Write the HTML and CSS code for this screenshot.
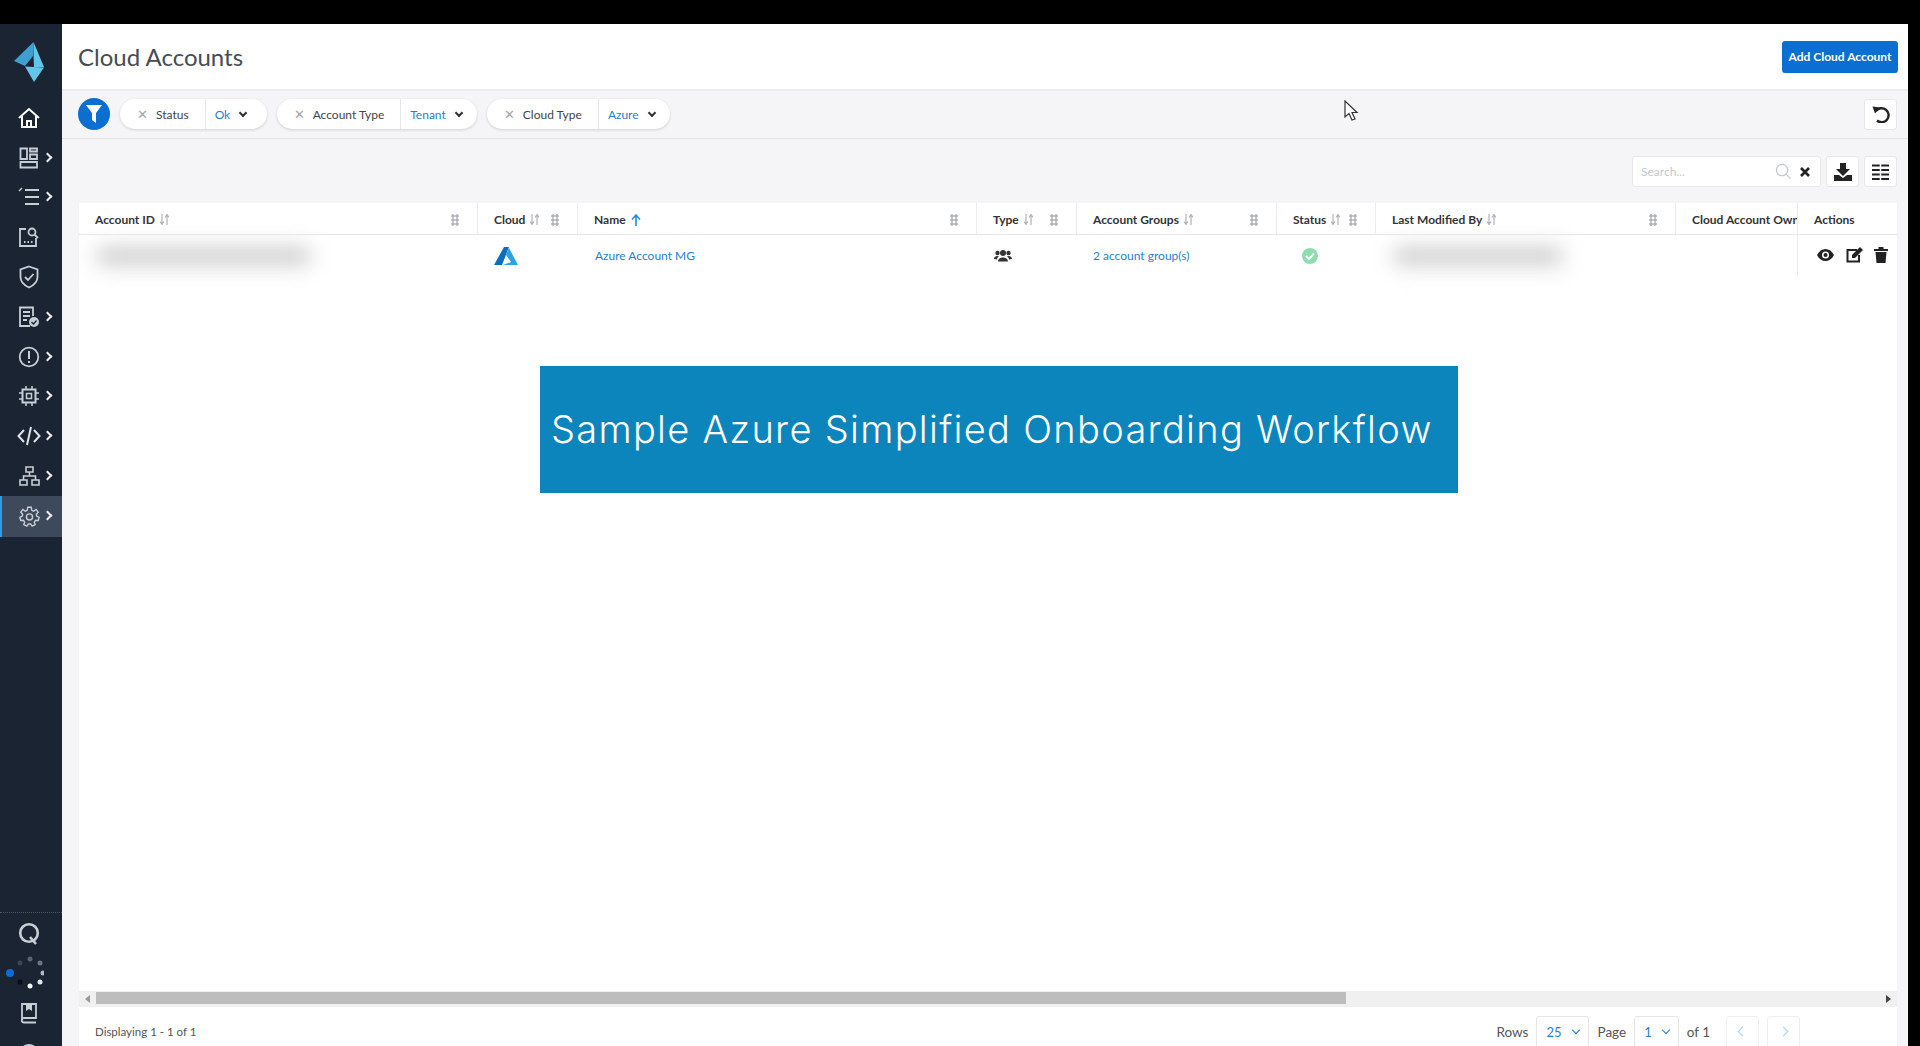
FILE: index.html
```html
<!DOCTYPE html>
<html lang="en">
<head>
    <meta charset="UTF-8">
    <title>Cloud Accounts</title>
    <link rel="stylesheet" href="styles.css">
</head>
<body>
    <svg class="oculto" width="0" height="0">
        <symbol id="ord" viewBox="0 0 9 11"><path d="M2 0 V10 M0 7.500 L2 10.500 L4 7.500 M7 11 V1 M5 3.500 L7 .500 L9 3.500" fill="none" stroke="#b0b3b8" stroke-width="1.200"/></symbol>
    </svg>
    <div id="topo"></div>
    <div id="app">
        <nav id="menu">
            <div class="logo">
                <svg width="30" height="40" viewBox="0 0 30 40"><path d="M19.500 0 L0 19 L11 24 L19 14 Z" fill="#3f9fd0"/><path d="M19.500 0 L30 25 H20 L19.500 14 Z" fill="#62c5ea"/><path d="M11 24.500 L30 25.500 L20 40 Z" fill="#62c5ea"/></svg>
            </div>
            <div class="item branco"><svg width="24" height="24" viewBox="0 0 24 24"><path d="M2 12 L12 3 L22 12 M5 10 V21 H19 V10 M10 21 V15 H14 V21" fill="none" stroke="#fff" stroke-width="2"/></svg></div>
            <div class="item"><svg width="20" height="22" viewBox="0 0 20 22"><path d="M1.500 1.500 H8 V12 H1.500 Z M11 1.500 H18 V4.500 H11 Z M11 7.500 H18 V12 H11 Z M1.500 15 H18 V20.500 H1.500 Z" fill="none" stroke="#c8ced6" stroke-width="1.800"/></svg><i class="seta"></i></div>
            <div class="item"><svg width="24" height="20" viewBox="0 0 24 20"><path d="M8 3 H22 M8 10 H22 M8 17 H22" stroke="#c8ced6" stroke-width="2"/><path d="M2 4 L5 1" stroke="#c8ced6" stroke-width="1.500"/></svg><i class="seta"></i></div>
            <div class="item"><svg width="22" height="22" viewBox="0 0 22 22"><path d="M8 3 H2 V20 H18 V12" fill="none" stroke="#c8ced6" stroke-width="1.800"/><circle cx="14" cy="6" r="3.500" fill="none" stroke="#c8ced6" stroke-width="1.800"/><path d="M16.500 8.500 L20 12" stroke="#c8ced6" stroke-width="2"/><path d="M6 16 H7.500 M9.500 16 H11 M13 16 H14.500" stroke="#c8ced6" stroke-width="1.800"/></svg></div>
            <div class="item"><svg width="20" height="24" viewBox="0 0 20 24"><path d="M10 1.500 L18.500 4.500 V12 C18.500 17 14.500 20.500 10 22.500 C5.500 20.500 1.500 17 1.500 12 V4.500 Z" fill="none" stroke="#c8ced6" stroke-width="1.800"/><path d="M6 12 L9 15 L14.500 9" fill="none" stroke="#c8ced6" stroke-width="1.800"/></svg></div>
            <div class="item"><svg width="22" height="22" viewBox="0 0 22 22"><path d="M12 20 H2 V1.500 H15 V10 M5 6 H12 M5 10 H12 M5 14 H9" fill="none" stroke="#c8ced6" stroke-width="1.800"/><circle cx="16" cy="16" r="5" fill="#c8ced6"/><path d="M13.500 16 L15.500 18 L18.500 14.500" fill="none" stroke="#1a2433" stroke-width="1.300"/></svg><i class="seta"></i></div>
            <div class="item"><svg width="22" height="22" viewBox="0 0 22 22"><circle cx="11" cy="11" r="9.300" fill="none" stroke="#c8ced6" stroke-width="1.800"/><path d="M11 5 V13 M11 15 V17" stroke="#c8ced6" stroke-width="2"/></svg><i class="seta"></i></div>
            <div class="item"><svg width="20" height="20" viewBox="0 0 20 20"><rect x="3.500" y="3.500" width="13" height="13" fill="none" stroke="#c8ced6" stroke-width="2"/><rect x="7.500" y="7.500" width="5" height="5" fill="none" stroke="#c8ced6" stroke-width="1.500"/><path d="M7 0 V3 M13 0 V3 M7 17 V20 M13 17 V20 M0 7 H3 M0 13 H3 M17 7 H20 M17 13 H20" stroke="#c8ced6" stroke-width="1.500"/></svg><i class="seta"></i></div>
            <div class="item"><svg width="24" height="20" viewBox="0 0 24 20"><path d="M7 4 L1.500 10 L7 16 M17 4 L22.500 10 L17 16 M14 1 L10 19" fill="none" stroke="#dfe3e8" stroke-width="2"/></svg><i class="seta"></i></div>
            <div class="item"><svg width="21" height="20" viewBox="0 0 21 20"><path d="M7 1 H14 V6 H7 Z M1 14 H8 V19 H1 Z M13 14 H20 V19 H13 Z M10.500 6 V10 M4.500 14 V10 H16.500 V14" fill="none" stroke="#c8ced6" stroke-width="1.600"/></svg><i class="seta"></i></div>
            <div class="item ativo"><svg width="21" height="21" viewBox="0 0 24 24"><path d="M10 1.500 H14 L14.600 5 L16.800 6 L19.600 4 L22 7 L19.800 9.400 L20.200 11.500 L23 13 L22 16.500 L19 16.300 L17.500 18.500 L18.500 21.300 L15 23 L13.300 20.500 H10.700 L9 23 L5.500 21.300 L6.500 18.500 L5 16.300 L2 16.500 L1 13 L3.800 11.500 L4.200 9.400 L2 7 L4.400 4 L7.200 6 L9.400 5 Z" fill="none" stroke="#c8ced6" stroke-width="1.600"/><circle cx="12" cy="12.500" r="3.500" fill="none" stroke="#c8ced6" stroke-width="1.600"/></svg><i class="seta"></i></div>
            <div class="menu-baixo">
                <div class="item-baixo busca-q"><svg width="22" height="24" viewBox="0 0 22 24"><circle cx="11" cy="11" r="8.800" fill="none" stroke="#c8ced6" stroke-width="2.600"/><path d="M12 15 L18 22" stroke="#c8ced6" stroke-width="2.600"/></svg></div>
                <div class="item-baixo spinner"><svg width="44" height="34" viewBox="0 0 44 34"><circle cx="10" cy="17" r="4" fill="#0a6fd1"/><circle cx="20" cy="7" r="2.500" fill="#3b4656"/><circle cx="30" cy="3" r="2.500" fill="#5a6473"/><circle cx="40" cy="7" r="2.500" fill="#6d7683"/><circle cx="43" cy="17" r="2.500" fill="#b4b9c0"/><circle cx="40" cy="26" r="2.500" fill="#e4e6e8"/><circle cx="30" cy="30" r="2.500" fill="#fff"/><circle cx="20" cy="26" r="2.500" fill="#0a0f16"/></svg></div>
                <div class="item-baixo livro"><svg width="18" height="22" viewBox="0 0 18 22"><path d="M2 18 V2 H16 V16 H4 C1 16 1 20.500 4 20.500 H16" fill="none" stroke="#c8ced6" stroke-width="1.800"/><path d="M6 2 V9 L9 7 L12 9 V2" fill="#c8ced6"/></svg></div>
                <div class="item-baixo ajuda"><svg width="22" height="22" viewBox="0 0 22 22"><circle cx="11" cy="11" r="9" fill="none" stroke="#c8ced6" stroke-width="1.800"/></svg></div>
            </div>
        </nav>

        <main id="principal">
            <header id="cabecalho">
                <h1>Cloud Accounts</h1>
                <button class="btn-add">Add Cloud Account</button>
            </header>

            <div id="filtros">
                <span class="filtro-btn"><svg width="16" height="18" viewBox="0 0 16 18"><path d="M0 0 H16 L10 8 V18 L6 15 V8 Z" fill="#fff"/></svg></span>
                <div class="pilula"><span class="pil-nome"><b>&#10005;</b>Status</span><span class="pil-valor">Ok<i class="v"></i></span></div>
                <div class="pilula"><span class="pil-nome"><b>&#10005;</b>Account Type</span><span class="pil-valor">Tenant<i class="v"></i></span></div>
                <div class="pilula"><span class="pil-nome"><b>&#10005;</b>Cloud Type</span><span class="pil-valor">Azure<i class="v"></i></span></div>
                <span class="quadrado desfazer"><svg width="18" height="18" viewBox="0 0 18 18"><path d="M4 6 A7 7 0 1 1 5 15.500" fill="none" stroke="#222" stroke-width="2.400"/><path d="M.500 1.500 L8 2.500 L3 8.500 Z" fill="#222"/></svg></span>
            </div>

            <div id="conteudo">
                <div id="ferramentas">
                    <div class="busca">
                        <span class="busca-texto">Search...</span>
                        <svg width="17" height="17" viewBox="0 0 18 18"><circle cx="7.500" cy="7.500" r="6" fill="none" stroke="#c4c8cc" stroke-width="1.300"/><path d="M12 12 L16.500 16.500" stroke="#c4c8cc" stroke-width="1.300"/></svg>
                        <svg class="busca-x" width="10" height="10" viewBox="0 0 10 10"><path d="M1 1 L9 9 M9 1 L1 9" stroke="#222" stroke-width="2.600"/></svg>
                    </div>
                    <span class="quadrado"><svg width="18" height="18" viewBox="0 0 18 18"><path d="M6 0 H12 V6 H16 L9 13 L2 6 H6 Z" fill="#222"/><path d="M0 12 H5 L9 15 L13 12 H18 V18 H0 Z" fill="#222"/></svg></span>
                    <span class="quadrado"><svg width="17" height="16" viewBox="0 0 17 16"><path d="M0 1.500 H17 M0 6 H17 M0 10.500 H17 M0 15 H17" stroke="#222" stroke-width="2"/><path d="M8.500 0 V16" stroke="#fff" stroke-width="1.500"/></svg></span>
                </div>

                <div id="tabela">
                    <div class="linha cabeca">
                        <div class="c c1">Account ID<svg class="ord"><use href="#ord"/></svg><i class="pega"></i></div>
                        <div class="c c2">Cloud<svg class="ord"><use href="#ord"/></svg><i class="pega"></i></div>
                        <div class="c c3">Name<svg class="up" width="10" height="12" viewBox="0 0 10 12"><path d="M5 12 V2 M1 5.500 L5 1 L9 5.500" fill="none" stroke="#1f8fd8" stroke-width="1.600"/></svg><i class="pega"></i></div>
                        <div class="c c4">Type<svg class="ord"><use href="#ord"/></svg><i class="pega"></i></div>
                        <div class="c c5">Account Groups<svg class="ord"><use href="#ord"/></svg><i class="pega"></i></div>
                        <div class="c c6">Status<svg class="ord"><use href="#ord"/></svg><i class="pega"></i></div>
                        <div class="c c7">Last Modified By<svg class="ord"><use href="#ord"/></svg><i class="pega"></i></div>
                        <div class="c c8">Cloud Account Owner</div>
                        <div class="c c9">Actions</div>
                    </div>
                    <div class="linha dados">
                        <div class="c c1"><span class="borrao b1"></span></div>
                        <div class="c c2"><svg width="24" height="18" viewBox="0 0 24 18"><path d="M10 0 H15 L8 18 H0 Z" fill="#0a6fc2"/><path d="M15 1 L24 18 H9 L17 15 L12 8 Z" fill="#2aa4e0"/></svg></div>
                        <div class="c c3 link">Azure Account MG</div>
                        <div class="c c4"><svg width="18" height="13" viewBox="0 0 18 13"><circle cx="9" cy="4" r="3" fill="#333"/><circle cx="3.500" cy="4" r="2.200" fill="#333"/><circle cx="14.500" cy="4" r="2.200" fill="#333"/><path d="M4 12.500 C4 7 14 7 14 12.500 Z M0 10 C0 6.500 4 6.500 5 7.500 C3.500 8.500 3 9.500 3 10.500 Z M18 10 C18 6.500 14 6.500 13 7.500 C14.500 8.500 15 9.500 15 10.500 Z" fill="#333"/></svg></div>
                        <div class="c c5 link">2 account group(s)</div>
                        <div class="c c6"><svg width="16" height="16" viewBox="0 0 16 16"><circle cx="8" cy="8" r="8" fill="#8fdcae"/><path d="M4 8 L7 11 L12 5.500" fill="none" stroke="#fff" stroke-width="2"/></svg></div>
                        <div class="c c7"><span class="borrao b2"></span></div>
                        <div class="c c8"></div>
                        <div class="c c9 acoes">
                            <svg width="17" height="12" viewBox="0 0 17 12"><path d="M0 6 C4 -2 13 -2 17 6 C13 14 4 14 0 6 Z" fill="#222"/><circle cx="8.500" cy="6" r="3.500" fill="#fff"/><circle cx="8.500" cy="6" r="2" fill="#222"/></svg>
                            <svg width="17" height="16" viewBox="0 0 17 16"><path d="M11 3 H1.500 V14.500 H13 V8" fill="none" stroke="#222" stroke-width="2"/><path d="M6 8 L14 0 L17 3 L9 11 H6 Z" fill="#222"/></svg>
                            <svg width="14" height="16" viewBox="0 0 14 16"><path d="M0 2 H4.500 V0 H9.500 V2 H14 V4 H0 Z M1.500 5 H12.500 L11.500 16 H2.500 Z" fill="#222"/></svg>
                        </div>
                    </div>
                    <div class="miolo"></div>
                    <div class="rolagem">
                        <i class="seta-esq"></i>
                        <div class="trilho"><div class="polegar"></div></div>
                        <i class="seta-dir"></i>
                    </div>
                    <footer id="rodape">
                        <span class="mostrando">Displaying 1 - 1 of 1</span>
                        <div class="paginas">
                            <span>Rows</span>
                            <span class="sel sel-rows">25<i class="v2"></i></span>
                            <span>Page</span>
                            <span class="sel">1<i class="v2"></i></span>
                            <span class="de">of 1</span>
                            <span class="nav"><i class="nav-esq"></i></span>
                            <span class="nav"><i class="nav-dir"></i></span>
                        </div>
                    </footer>
                </div>
            </div>
        </main>
    </div>

    <!-- faixa por cima da tabela -->
    <div id="faixa">Sample Azure Simplified Onboarding Workflow</div>
    <svg id="cursor" width="16" height="22" viewBox="0 0 16 22"><path d="M1 1 V17 L5 13.500 L8 20 L11 19 L8 12.500 H13 Z" fill="#fff" stroke="#333" stroke-width="1.200"/></svg>
</body>
</html>
```

FILE: styles.css
```css
* {
    box-sizing: border-box;
    font-family: Lato, "Open Sans", sans-serif;
}
html, body {
    margin: 0;
    height: 1046px;
    overflow: hidden;
    background-color: #000;
}
.oculto {
    display: none;
}
#topo {
    height: 24px;
    background-color: #000;
}
#app {
    display: flex;
    height: 1100px;
    width: 1908px;
    background-color: #f5f5f7;
}

/* menu lateral */
#menu {
    width: 62px;
    flex-shrink: 0;
    height: 1022px;
    overflow: hidden;
    background-color: #1a2433;
    display: flex;
    flex-direction: column;
}
.logo {
    height: 74px;
    padding: 18px 0 0 14px;
}
.item {
    height: 39.800px;
    flex-shrink: 0;
    position: relative;
    display: flex;
    align-items: center;
    justify-content: center;
    padding-right: 4px;
}
.seta {
    position: absolute;
    left: 44px;
    top: 50%;
    width: 7px;
    height: 7px;
    margin-top: -4px;
    border-top: 2px solid #e8eaed;
    border-right: 2px solid #e8eaed;
    transform: rotate(45deg);
}
.ativo {
    background-color: #3e4a5c;
    border-left: 2px solid #2f9be8;
    padding-right: 6px;
    height: 41px;
}
.ativo .seta {
    left: 42px;
}
.menu-baixo {
    margin-top: auto;
    border-top: 1px dotted #4b5666;
    margin-bottom: -23px;
}
.item-baixo {
    display: flex;
    align-items: center;
    justify-content: center;
    padding-right: 4px;
}
.busca-q {
    height: 42px;
}
.spinner {
    height: 42px;
    align-items: flex-start;
    justify-content: flex-start;
    padding: 1px 0 0;
}
.livro {
    height: 32px;
}
.ajuda {
    height: 40px;
    align-items: flex-start;
    padding-top: 14px;
}

/* area principal */
#principal {
    flex: 1;
    min-width: 0;
    display: flex;
    flex-direction: column;
}
#cabecalho {
    height: 67px;
    flex-shrink: 0;
    display: flex;
    align-items: center;
    justify-content: space-between;
    padding: 0 10px 0 16px;
    background-color: #fff;
    border-bottom: 2px solid #ececee;
}
#cabecalho h1 {
    margin: 0;
    font-size: 24px;
    font-weight: 400;
    color: #474c53;
}
.btn-add {
    width: 116px;
    height: 32px;
    border: none;
    border-radius: 3px;
    background-color: #0a6fd1;
    color: #fff;
    font-size: 12px;
    font-weight: 700;
    padding: 0;
}

#filtros {
    height: 48px;
    flex-shrink: 0;
    display: flex;
    align-items: center;
    gap: 10px;
    padding: 0 11px 1px 16px;
    border-bottom: 1px solid #e4e4e6;
}
.filtro-btn {
    width: 32px;
    height: 32px;
    border-radius: 50%;
    background-color: #0a6fd1;
    display: flex;
    align-items: center;
    justify-content: center;
}
.pilula {
    display: flex;
    height: 30px;
    align-items: center;
    background-color: #fff;
    border-radius: 15px;
    box-shadow: 0 1px 3px rgba(0, 0, 0, .15);
    font-size: 12px;
    color: #444;
}
.pil-nome {
    display: flex;
    align-items: center;
    height: 100%;
    padding: 0 16px 0 17px;
    border-right: 1px solid #e8e8ea;
}
.pil-nome b {
    width: 10px;
    font-size: 13px;
    font-weight: 400;
    color: #a5a5a5;
    margin-right: 9px;
}
.pil-valor {
    display: flex;
    align-items: center;
    min-width: 61px;
    color: #1f7fd6;
    padding: 0 15px 0 9px;
}
.v {
    width: 6px;
    height: 6px;
    margin: -3px 0 0 10px;
    border-right: 2px solid #333;
    border-bottom: 2px solid #333;
    transform: rotate(45deg);
}
.quadrado {
    width: 33px;
    height: 31px;
    display: flex;
    align-items: center;
    justify-content: center;
    background-color: #fff;
    border: 1px solid #e8e8ea;
    border-radius: 3px;
}
.desfazer {
    margin-left: auto;
}

#conteudo {
    padding: 0 11px 0 17px;
    flex: 1;
    min-height: 0;
}
#ferramentas {
    height: 64px;
    display: flex;
    justify-content: flex-end;
    align-items: flex-start;
    padding-top: 17px;
    gap: 5px;
}
.busca {
    width: 189px;
    height: 31px;
    display: flex;
    align-items: center;
    background-color: #fff;
    border: 1px solid #e8e8ea;
    border-radius: 3px;
    padding: 0 10px 0 8px;
}
.busca-texto {
    flex: 1;
    font-size: 12px;
    color: #c4c8cc;
}
.busca-x {
    margin-left: 8px;
}

/* tabela */
#tabela {
    background-color: #fff;
    width: 1818px;
}
.linha {
    display: flex;
    position: relative;
}
.cabeca {
    height: 32px;
    border-bottom: 1px solid #e8e8ea;
    font-size: 12px;
    font-weight: 700;
    color: #333;
}
.dados {
    height: 41px;
    font-size: 12px;
}
.c {
    position: relative;
    display: flex;
    align-items: center;
    padding-left: 16px;
    overflow: hidden;
    white-space: nowrap;
    flex-shrink: 0;
}
.cabeca .c {
    border-right: 1px solid #ececee;
    padding-top: 2px;
}
.c1 { width: 399px; }
.c2 { width: 100px; }
.c3 { width: 399px; }
.c4 { width: 100px; }
.c5 { width: 200px; }
.c6 { width: 99px; }
.c7 { width: 300px; }
.c8 { width: 121px; }
.c9 { width: 100px; }
.cabeca .c9, .cabeca .c8 {
    border-right: none;
}
.c9 {
    background-color: #fff;
    border-left: 1px solid #ececee;
}
.link {
    color: #1f7fd6;
}
.dados .c3, .dados .c4 {
    padding-left: 17px;
}
.dados .c6 {
    padding-left: 25px;
}
.ord {
    width: 9px;
    height: 11px;
    margin-left: 5px;
}
.up {
    margin-left: 5px;
}
.pega {
    position: absolute;
    right: 18px;
    top: 11px;
    width: 8px;
    height: 12px;
    background-image: radial-gradient(#b0b3b8 1.500px, transparent 1.800px);
    background-size: 4px 4px;
}
.borrao {
    display: block;
    background-color: #cdcdcd;
    filter: blur(9px);
    height: 12px;
    box-shadow: 0 0 14px 6px #e6e6e6;
}
.b1 {
    width: 205px;
}
.b2 {
    width: 160px;
}
.dados .c1, .dados .c7 {
    padding-left: 22px;
    overflow: visible;
}
.acoes {
    gap: 11.500px;
    padding-left: 19px;
    height: 40px;
}
.miolo {
    height: 715px;
}
.rolagem {
    height: 16px;
    background-color: #f0f0f1;
    display: flex;
    align-items: center;
}
.trilho {
    flex: 1;
    height: 12px;
    margin-bottom: 2px;
}
.polegar {
    width: 1250px;
    height: 12px;
    background-color: #bdbdbd;
    margin-left: 6px;
}
.seta-esq, .seta-dir {
    width: 0;
    height: 0;
    border-top: 4px solid transparent;
    border-bottom: 4px solid transparent;
}
.seta-esq {
    border-right: 5px solid #999;
    margin-left: 6px;
}
.seta-dir {
    border-left: 5px solid #444;
    margin-right: 6px;
}

#rodape {
    display: flex;
    justify-content: space-between;
    align-items: center;
    height: 49px;
    padding: 0 97px 0 16px;
    font-size: 11.500px;
    color: #555;
}
.paginas {
    display: flex;
    align-items: center;
    gap: 8px;
    font-size: 13.500px;
}
.sel {
    display: flex;
    align-items: center;
    gap: 11px;
    height: 32px;
    padding: 0 9px;
    border: 1px solid #e4e6e8;
    border-radius: 3px;
    color: #1f7fd6;
    font-size: 13px;
}
.sel-rows {
    margin-right: 1px;
}
.v2 {
    width: 6px;
    height: 6px;
    margin-top: -3px;
    border-right: 1px solid #1f7fd6;
    border-bottom: 1px solid #1f7fd6;
    transform: rotate(45deg);
}
.de {
    margin-right: 8px;
}
.nav {
    width: 33px;
    height: 32px;
    display: flex;
    align-items: center;
    justify-content: center;
    border: 1px solid #eeeff0;
    border-radius: 3px;
}
.nav-esq, .nav-dir {
    width: 7px;
    height: 7px;
    border-bottom: 1px solid #a9cdee;
    border-left: 1px solid #a9cdee;
}
.nav-esq {
    transform: rotate(45deg);
}
.nav-dir {
    transform: rotate(225deg);
}

/* por cima */
#faixa {
    position: absolute;
    left: 540px;
    top: 366px;
    width: 918px;
    height: 127px;
    padding: 0 0 2px 11px;
    background-color: #0c85bd;
    color: #fff;
    font-family: Inter, "Open Sans", sans-serif;
    font-weight: 300;
    font-size: 38px;
    letter-spacing: 1.300px;
    display: flex;
    align-items: center;
}
#cursor {
    position: absolute;
    left: 1344px;
    top: 100px;
}
```
